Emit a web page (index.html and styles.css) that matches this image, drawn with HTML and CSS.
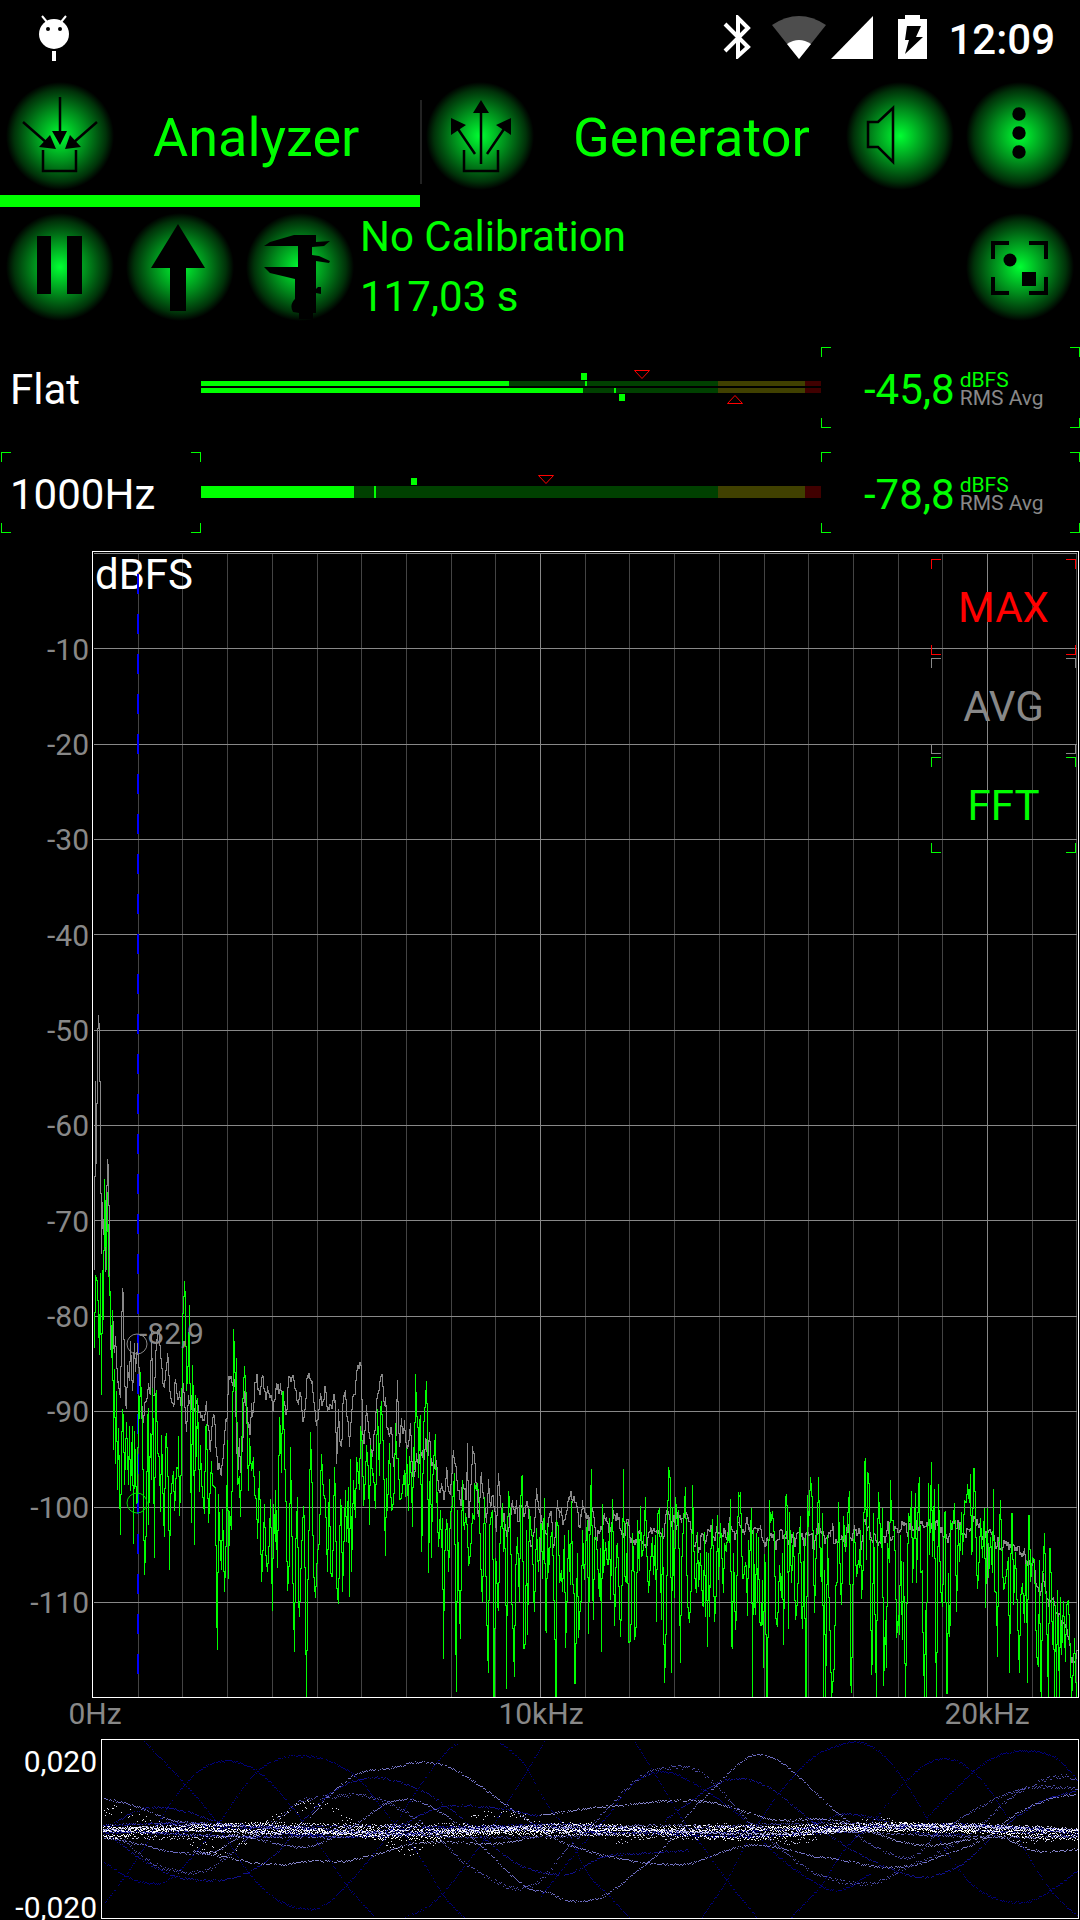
FILE: index.html
```html
<!DOCTYPE html>
<html lang="en">
<head>
<meta charset="utf-8">
<meta name="viewport" content="width=device-width, initial-scale=1">
<title>Audio Analyzer</title>
<link rel="stylesheet" href="styles.css">
</head>
<body>
<header class="status">
  <svg class="status-bug" width="32" height="48" viewBox="38 15 32 48" aria-hidden="true">
    <path d="M42 16l5 6M66 16l-5 6" stroke="#fff" stroke-width="2"/>
    <ellipse cx="54" cy="34" rx="15" ry="15" fill="#fff"/>
    <circle cx="48" cy="29" r="2" fill="#000"/><circle cx="60" cy="29" r="2" fill="#000"/>
    <path d="M52 51h4v10h-4z" fill="#fff"/>
  </svg>
  <div class="status-icons">
    <svg width="28" height="44" viewBox="0 0 28 44" aria-hidden="true"><path d="M2 9L25 32 15 41V3L25 13 2 36" fill="none" stroke="#fff" stroke-width="4"/></svg>
    <svg class="wifi" width="54" height="44" viewBox="0 0 54 44" aria-hidden="true"><path d="M27 44L0 10Q27-8 54 10z" fill="#4d4d4d"/><path d="M27 44L15 29Q27 21 39 29z" fill="#fff"/></svg>
    <svg class="signal" width="42" height="44" viewBox="0 0 42 44" aria-hidden="true"><path d="M42 1V44H0z" fill="#fff"/></svg>
    <svg class="battery" width="30" height="44" viewBox="0 0 30 44" aria-hidden="true"><path d="M7 0h15v4h7v40H0V4h7z" fill="#fff"/><path d="M9 11h14l-5 11h7L7 39l4-14H7z" fill="#000"/></svg>
    <span class="clock">12:09</span>
  </div>
</header>

<nav class="tabs">
  <button class="tab tab-active" type="button">
    <svg class="orb" viewBox="0 0 120 120" aria-hidden="true">
      <path d="M60 21V58M23 46L47 67M97 46L73 67M43 74V95H76V74" class="thin"/>
      <path d="M52 55h15l-7 14zM50 59l6 14-17-2zM70 59l-5 14 16-2z"/>
    </svg>
    <span>Analyzer</span>
  </button>
  <button class="tab" type="button">
    <svg class="orb" viewBox="0 0 120 120" aria-hidden="true">
      <path d="M61 30V88M38 53L55 78M84 53L67 78M44 74V95H78V74" class="thin"/>
      <path d="M61 24l8 13H53zM31 42l15 7-15 10zM91 42l-15 7 15 10z"/>
    </svg>
    <span>Generator</span>
  </button>
  <button class="orb-button" type="button" aria-label="Sound">
    <svg class="orb" viewBox="0 0 120 120" aria-hidden="true"><path d="M28 46H38L53 32V86L38 71H28z" class="thin"/></svg>
  </button>
  <button class="orb-button" type="button" aria-label="Menu">
    <svg class="orb" viewBox="0 0 120 120" aria-hidden="true"><circle cx="59" cy="38" r="6.7"/><circle cx="59" cy="57" r="6.7"/><circle cx="59" cy="76" r="6.7"/></svg>
  </button>
</nav>

<section class="toolbar">
  <button class="orb-button" type="button" aria-label="Pause">
    <svg class="orb" viewBox="0 0 120 120" aria-hidden="true"><path d="M37 29h14v58H37zM67 29h15v58H67z"/></svg>
  </button>
  <button class="orb-button" type="button" aria-label="Peak">
    <svg class="orb" viewBox="0 0 120 120" aria-hidden="true"><path d="M58 17L85 61H66V104H50V61H31z"/></svg>
  </button>
  <button class="orb-button" type="button" aria-label="Calibration">
    <svg class="orb" viewBox="0 0 120 120" aria-hidden="true"><path d="M24 39L30 35 54 28H76V35L90 34 84 39 72 40V48L79 49 90 54 89 56 76 54V82L78 80H81V87L76 86V106H73V112H59V106L53 105Q49 98 55 92V72L30 66 24 60H58V39z"/></svg>
  </button>
  <div class="calibration"><span>No Calibration</span><span>117,03 s</span></div>
  <button class="orb-button" type="button" aria-label="Snapshot">
    <svg class="orb" viewBox="0 0 120 120" aria-hidden="true">
      <path d="M33 52V36H49M69 36H86V52M33 70V86H49M69 86H86V70" class="thick"/>
      <circle cx="50" cy="53" r="6.5"/><path d="M62 65h14v14H62z"/>
    </svg>
  </button>
</section>

<section class="meters">
  <div class="meter-row">
    <span class="meter-name">Flat</span>
    <svg class="meter" viewBox="0 0 620 81" preserveAspectRatio="none" role="img" aria-label="Flat level">
      <path d="M0 34h517v5H0zM0 41h517v5H0z" fill="#004000"/>
      <path d="M517 34h87v5h-87zM517 41h87v5h-87z" fill="#404000"/>
      <path d="M604 34h16v5h-16zM604 41h16v5h-16z" fill="#400000"/>
      <path d="M0 34h308v5H0zM0 41h382v5H0zM384 34h2v5h-2zM413 41h2v5h-2zM380 26h6v7h-6zM418 47h6v7h-6z" fill="#0f0"/>
      <path d="M433.500 23.500h15l-7.500 8zM526.500 56.500h15l-7.500-8z" fill="none" stroke="#f00"/>
    </svg>
    <button class="readout frame" type="button"><span class="value">-45,8</span><span class="units"><span>dBFS</span><span class="dim">RMS Avg</span></span></button>
  </div>
  <div class="meter-row">
    <button class="meter-name frame" type="button"><span>1000Hz</span></button>
    <svg class="meter" viewBox="0 0 620 81" preserveAspectRatio="none" role="img" aria-label="1000Hz level">
      <path d="M0 34h517v12H0z" fill="#004000"/>
      <path d="M517 34h87v12h-87z" fill="#404000"/>
      <path d="M604 34h16v12h-16z" fill="#400000"/>
      <path d="M0 34h153v12H0zM173 34h2v12h-2zM210 26h6v7h-6z" fill="#0f0"/>
      <path d="M337.500 23.500h15l-7.500 8z" fill="none" stroke="#f00"/>
    </svg>
    <button class="readout frame" type="button"><span class="value">-78,8</span><span class="units"><span>dBFS</span><span class="dim">RMS Avg</span></span></button>
  </div>
</section>

<section class="spectrum">
  <svg class="plot" viewBox="0 540 1080 1190" role="img" aria-label="Frequency spectrum">
    <g id="grid" class="crisp"></g>
    <text x="95" y="589" class="title">dBFS</text>
    <g class="axis axis-y">
      <text x="89" y="660">-10</text><text x="89" y="755">-20</text><text x="89" y="850">-30</text>
      <text x="89" y="946">-40</text><text x="89" y="1041">-50</text><text x="89" y="1136">-60</text>
      <text x="89" y="1232">-70</text><text x="89" y="1327">-80</text><text x="89" y="1422">-90</text>
      <text x="89" y="1518">-100</text><text x="89" y="1613">-110</text>
    </g>
    <g class="axis axis-x">
      <text x="95" y="1724">0Hz</text><text x="541" y="1724">10kHz</text><text x="987" y="1724">20kHz</text>
    </g>
    <path d="M138 574V1675" class="cursor"/>
    <path id="average" class="trace average"/>
    <path id="live" class="trace live"/>
    <circle cx="137" cy="1344" r="10" class="marker"/>
    <circle cx="137" cy="1503" r="10" class="marker marker-live"/>
    <text x="139" y="1344" class="marker-value">-82,9</text>
    <path d="M92.500 551.500H1078.500V1697.500H92.500z" class="border"/>
  </svg>
  <div class="legend">
    <button class="frame max" type="button">MAX</button>
    <button class="frame avg" type="button">AVG</button>
    <button class="frame fft" type="button">FFT</button>
  </div>
</section>

<section class="scope">
  <svg class="plot" viewBox="0 1730 1080 190" role="img" aria-label="Waveform">
    <g id="waves" class="crisp"></g>
    <path d="M101.500 1739.500H1078.500V1918.500H101.500z" class="border"/>
    <text x="97" y="1772" class="scope-label">0,020</text>
    <text x="97" y="1918" class="scope-label">-0,020</text>
  </svg>
</section>
<script src="script.js"></script>
</body>
</html>
```

FILE: styles.css
```css
* { box-sizing: border-box; }

body {
  margin: 0;
  background: #000;
  color: #fff;
  font-family: Roboto, "Noto Sans", sans-serif;
  font-size: 42px;
  line-height: 60px;
}

button {
  margin: 0;
  padding: 0;
  border: 0;
  background: none;
  color: inherit;
  font: inherit;
  cursor: pointer;
}

svg { display: block; flex: none; }

/* status bar */
.status {
  display: flex;
  justify-content: space-between;
  align-items: flex-start;
  height: 76px;
  padding: 15px 25px 0 38px;
}
.status-icons { display: flex; align-items: center; height: 44px; }
.wifi { margin-left: 21px; }
.signal { margin-left: 5px; }
.battery { margin-left: 25px; }
.clock { margin-left: 20px; padding-top: 6px; font-weight: 500; }

/* tabs and round buttons */
.tabs { display: flex; height: 131px; color: #0f0; }
.tab {
  display: flex;
  flex: 1;
  gap: 33px;
  align-items: center;
  height: 131px;
  border-bottom: 12px solid transparent;
  font-size: 54px;
  text-align: left;
}
.tab span { padding-top: 4px; }
.tab-active { border-bottom-color: #0f0; }
.tab + .tab {
  background: linear-gradient(#222, #222) left top 24px / 2px 84px no-repeat;
}
.orb-button { flex: none; width: 120px; height: 120px; }
.orb {
  width: 120px;
  height: 120px;
  background: radial-gradient(circle, #00ff32 0, #008e1c 26px, #003209 46px, transparent 54px);
}
.thin { fill: none; stroke: #000; stroke-width: 2.5; }
.thick { fill: none; stroke: #000; stroke-width: 4; }

.toolbar { display: flex; height: 120px; color: #0f0; }
.calibration { display: flex; flex: 1; flex-direction: column; }

/* corner brackets */
.frame {
  --h: linear-gradient(currentColor, currentColor);
  background:
    var(--h) left top / 10px 1px, var(--h) left top / 1px 10px,
    var(--h) right top / 10px 1px, var(--h) right top / 1px 10px,
    var(--h) left bottom / 10px 1px, var(--h) left bottom / 1px 10px,
    var(--h) right bottom / 10px 1px, var(--h) right bottom / 1px 10px;
  background-repeat: no-repeat;
}

/* level meters */
.meters { display: flex; flex-direction: column; gap: 24px; padding-top: 20px; }
.meter-row { display: flex; align-items: center; height: 81px; }
.meter { flex: 1; width: 0; height: 81px; }
.meter-name {
  width: 200px;
  height: 81px;
  margin-left: 1px;
  padding: 13px 0 8px 9px;
  text-align: left;
}
.meter-name.frame { color: #0f0; }
.meter-name.frame span { color: #fff; }
.readout {
  display: flex;
  align-items: center;
  gap: 5px;
  width: 259px;
  height: 81px;
  padding: 5px 0 0 43px;
  color: #0f0;
  text-align: left;
}
.units { display: flex; flex-direction: column; padding-bottom: 3px; font-size: 21px; line-height: 18px; }
.dim { color: #888; }

/* spectrum */
.spectrum { position: relative; margin-top: 7px; }
.plot { width: 100%; height: auto; }
.plot text { font-size: 30px; }
.plot .title { font-size: 42px; fill: #fff; }
.axis { fill: #888; }
.axis-y { text-anchor: end; }
.axis-x { text-anchor: middle; }
.crisp, .trace, .cursor, .border { shape-rendering: crispEdges; }
.minor { stroke: #444; }
.major { stroke: #888; }
.trace { fill: none; stroke-width: 1; }
.average { stroke: #888; }
.live { stroke: #0f0; }
.cursor { fill: none; stroke: #00f; stroke-width: 2; stroke-dasharray: 20 20; }
.marker { fill: none; stroke: #888; }
.marker-live { stroke: #0d0; }
.marker-value { fill: #888; }
.border { fill: none; stroke: #fff; }
.legend {
  position: absolute;
  top: 19px;
  right: 4px;
  display: grid;
  gap: 3px;
  width: 145px;
}
.legend .frame { height: 96px; padding-top: 2px; }
.max { color: #f00; }
.avg { color: #888; }
.fft { color: #0f0; }

.scope-label { fill: #fff; text-anchor: end; }
```

FILE: script.js
```js
const NS = 'http://www.w3.org/2000/svg';

function addPath(parent, d, attrs) {
  const p = document.createElementNS(NS, 'path');
  p.setAttribute('d', d);
  for (const k in attrs) p.setAttribute(k, attrs[k]);
  parent.appendChild(p);
}

// Grid: 1 kHz columns, 10 dB rows
const grid = document.getElementById('grid');
let minor = '', major = '';
for (let k = 1; k <= 22; k++) {
  const line = `M${Math.floor(93.5 + k * 44.7) + 0.5} 553V1697`;
  if (k % 10) minor += line; else major += line;
}
for (let k = 0; k < 12; k++) major += `M94 ${Math.floor(553.5 + k * 95.35) + 0.5}H1077`;
addPath(grid, minor, { class: 'minor' });
addPath(grid, major, { class: 'major' });

const bands = [[80, 980, 3, 2.119], [360, 1300, 3, 3], [720, 1380, 3, 3]];

const live = [
`43,780 46,625 52,640 58,795 61,620 65,880 67,615 70,720 73,422 76,510 79,615 82,450 86,585 89,670 92,660 95,800 98,700 100,995 103,825 106,1025 110,870 113,1080 116,950 121,1177 124,1000 127,908 131,930 134,1070 139,937 146,1070 149,945 152,1083 157,945 160,1195 164,955 168,1110 172,1100 175,880 178,930 181,830 187,960 194,1260 199,1150 201,930 205,907 206,1155 212,960 214,1060 217,865 220,990 223,1224 226,880 229,868 233,1000 238,1010 241,1128 244,965 249,1128 253,1180 256,970 260,960 264,1080 268,1250 271,1100 275,1075 280,1040 284,1125 290,1032 295,1035 296,967 299,1135 304,1020 307,710 310,700 313,638 316,680 320,870 324,800 327,688 331,1020 334,1150 337,815 340,900 343,1197 347,880 350,1010 353,885 358,1085 361,985 365,1060 373,1132 376,950 379,940 385,1150 390,1065 395,1020 398,1070 406,1075 409,1320 412,1420 415,1090 418,1165 424,1250 427,1120 433,1297 439,1165 443,975 446,1270 449,1125 455,1165 458,1000 461,740 464,790 467,870 470,800 473,1070 479,1050 482,1138 488,910 493,818 499,890 505,1083 509,970 514,1040 520,1010 523,1090 530,1100 532,1185 539,1040 545,1275 549,1185 554,1110 557,1205 563,1255 569,1180 572,1100 577,1337 580,1110 585,1190 587,1080 593,1245 597,925 600,960 603,1045 606,873 610,870 613,1030 617,1040 622,1295 628,1225 632,990 635,1130 643,1425 646,1210 652,1095 655,1305 659,1350 664,1210 669,1115 674,1150 679,1520 683,1320 688,1115 692,957 697,1100 700,1250 706,1310 712,1210 718,1190 721,1070 725,1005 730,1090 736,1100 743,1255 748,1058 751,1255 757,1265 763,1032 766,1100 770,1278 776,1323 780,1100 784,1125 788,1297 796,1080 800,1190 805,1075 809,1307 812,1015 815,1255 820,1060 826,1140 830,1010 836,1050 839,1080 842,945 848,985 851,1115 856,1050 860,985 864,1040 868,1155 872,985 876,1050 880,1045 887,1120 892,908 897,1050`,
`61,330 64,303 67,380 70,460 76,768 79,535 82,632 87,430 91,550 95,632 100,605 104,550 107,370 110,475 114,475 119,598 125,595 132,510 137,590 140,445 145,632 149,468 153,530 157,680 160,440 163,510 166,222 170,330 174,400 176,535 178,365 181,345 185,755 188,655 190,380 194,345 199,243 202,375 206,818 211,450 214,773 218,550 222,435 226,403 228,610 230,500 233,650 236,740 240,630 244,745 248,655 251,1076 254,780 258,658 262,680 266,815 272,640 278,610 283,520 286,945 289,1175 293,630 296,820 301,1018 304,720 306,540 310,660 313,690 317,640 322,680 326,797 332,760 337,640 342,660 344,548 350,570 352,548 357,625 362,775 368,905 374,592 378,905 381,1042 385,1120 389,680 393,640 398,630 399,920 401,1190 403,1190 405,775 409,790 412,905 415,932 419,755 424,650 427,610 431,755 434,660 438,1000 440,1168 443,720 446,573 450,635 455,885 458,935 463,1132 467,820 472,712 478,905 482,640 485,527 488,525 490,1040 493,1045 497,1020 499,690 502,1006 505,820 509,628 513,705 517,705 521,875 524,935 529,683 535,815 540,675 544,670 548,838 553,595 557,980 560,998 562,670 566,820 570,715 576,690 580,840 585,1075 586,1190 589,1190 590,660 594,680 598,850 604,810 607,875 613,705 616,1045 621,855 626,690 630,855 635,603 638,840 642,890 644,1150 647,1150 649,905 653,760 656,1015 660,905 664,900 668,690 672,840 677,740 681,660 685,1003 690,600 694,508 697,840 700,960 704,710 708,712 713,780 718,892 722,745 725,1057 727,612 730,820 735,725 741,795 746,790 748,655 752,900 758,598 763,977 768,740 773,730 777,900 782,1010 786,800 790,507 794,820 799,848 802,665 806,1030 810,1020 813,920 817,698 822,850 824,1020 828,970 832,660 838,812 841,618 845,770 851,740 856,592 860,730 866,880 872,785 876,710 880,825 886,705 890,965 893,645 898,625 904,960 908,685 912,1148 918,950 922,700 926,500 930,540 934,1118 938,620 943,893 947,590 952,675 956,630 960,1090 964,800 970,665 976,562 980,745 983,905 989,970 994,840 998,555 1003,820 1008,880 1012,695 1016,860 1022,760 1027,905 1031,920 1034,695 1037,950 1040,755 1043,1040 1046,760 1049,950 1052,770 1058,657 1063,965 1068,860 1073,645 1076,840`,
`0,430 4,485 7,580 10,640 14,490 19,515 22,455 27,490 31,358 34,785 38,808 41,518 46,750 49,690 52,480 55,335 59,350 62,335 67,590 71,595 76,545 80,560 83,708 86,480 89,565 92,455 95,383 97,950 100,450 104,655 107,706 109,460 113,670 116,470 119,720 124,738 127,600 129,865 132,522 136,570 140,950 142,950 144,590 149,360 152,430 158,393 162,470 166,705 173,740 178,555 184,655 187,520 190,795 195,350 199,343 202,405 205,748 208,395 213,610 219,455 223,600 227,720 232,660 236,555 241,408 245,680 248,748 253,475 257,950 260,950 262,345 266,440 271,290 276,365 282,698 288,480 292,440 296,290 301,570 305,605 308,400 311,950 314,570 317,950 320,760 322,465 326,600 332,800 335,950 338,920 343,850 347,620 352,600 356,367 360,610 365,675 371,408 376,515 380,480 384,370 388,333 392,890 395,940 400,500 404,450 409,590 414,540 418,565 421,450 425,658 430,540 434,250 436,234 439,540 442,275 446,280 449,340 454,885 457,820 461,400 466,800 469,950 472,490 476,335 480,460 484,505 487,385 491,917 495,720 499,865 502,490 507,550 512,300 515,420 519,420 525,540 530,775 534,705 538,765 542,465 547,780 551,545 556,950 560,760 566,400 570,430 574,333 578,610 582,430 586,340 590,610 594,325 598,292 602,580 606,570 608,690 612,950 615,690 618,950 620,770 623,560 626,310 629,525 634,246 638,530 643,328 646,740 650,950 653,680 656,313 661,620 667,680 672,400 676,392 680,938 683,935 685,580 688,772 691,700 692,420 698,450 702,368 706,470 710,697 714,430 718,545 724,395 727,525 733,360 738,370 743,312 747,370 751,283 754,525 758,500 761,265 764,265 768,540 773,628 778,520 782,415 788,535 793,385 797,683 801,385 806,593 811,470 816,580 820,328 824,630 828,640 832,830 836,525 840,360 845,470 849,630 856,600 864,530 869,878 873,400 876,400 880,675 887,515 892,705 897,880 902,650 908,610 913,728 916,560 920,540 923,910 926,405 929,405 932,605 937,530 943,540 949,820 954,860 958,540 962,915 965,950 968,610 974,460 979,700 984,950 987,505 991,505 996,795 1000,660 1004,950 1007,675 1010,950 1013,630 1017,950 1021,650 1025,825 1031,663 1036,845 1040,675 1045,660 1050,830 1055,950 1060,860 1063,775 1066,860 1070,950`];

const average = [
`43,615 46,215 49,390 52,130 55,75 58,105 61,320 64,580 67,470 70,540 73,480 77,618 80,490 82,380 85,400 88,550 92,785 95,770 98,715 102,790 106,755 112,855 116,850 121,885 124,750 127,652 130,670 133,850 138,910 142,815 147,850 151,765 157,870 163,770 167,830 173,770 178,850 183,870 188,935 193,910 200,885 205,855 210,880 214,730 218,870 222,870 228,760 234,740 240,790 246,840 252,865 257,830 262,790 268,860 274,895 280,905 287,845 293,890 299,870 303,920 309,855 314,890 319,958 325,880 331,910 336,870 342,915 349,890 355,900 361,920 366,930 373,935 379,893 385,950 392,1000 397,930 401,920 407,960 412,1035 418,1030 424,1050 430,990 437,930 441,915 445,840 450,845 456,860 461,845 467,880 473,1050 478,970 482,1045 488,990 494,870 500,900 505,950 510,955 514,897 518,925 523,870 530,835 535,865 541,875 548,838 555,890 561,860 567,880 572,885 580,910 586,875 590,855 595,870 600,855 606,870 613,900 619,920 626,845 633,842 641,840 648,880 655,900 659,875 664,890 670,935 676,890 683,838 691,845 697,850 704,910 709,945 716,920 722,875 728,900 736,865 743,915 748,900 754,910 760,885 765,890 770,1025 774,910 778,960 784,990 790,880 796,868 802,930 809,990 815,930 820,880 827,865 833,825 840,813 845,815 848,960 854,975 860,900 866,950 875,1010 884,960 890,900 897,860`,
`66,222 70,290 75,320 77,290 82,390 88,410 94,390 100,500 106,460 110,350 113,240 118,440 124,355 128,400 134,360 139,440 145,440 150,370 156,520 162,525 168,460 174,480 180,460 186,450 192,480 197,415 202,470 208,395 213,480 220,500 228,490 233,510 238,580 245,550 252,595 259,502 266,570 272,585 279,450 286,490 292,550 300,615 306,560 312,570 318,600 321,430 326,650 332,600 337,437 343,480 349,560 356,650 363,515 368,580 374,590 379,670 386,538 391,620 397,590 403,625 409,695 415,520 420,600 427,650 433,655 439,705 446,680 452,640 458,600 464,640 470,600 475,665 482,610 489,640 495,620 500,610 506,640 512,730 518,720 524,700 529,565 534,630 540,640 547,690 554,680 560,705 568,640 573,635 580,745 586,680 592,600 598,655 603,620 607,670 615,655 622,620 628,600 631,575 637,610 643,595 650,625 657,675 663,650 667,600 673,640 680,640 687,680 692,620 698,620 704,680 710,720 716,690 722,680 728,690 734,640 740,650 747,690 753,665 760,630 767,660 772,640 779,670 785,690 790,705 796,690 803,658 810,720 817,705 824,720 830,730 837,690 843,720 850,735 857,740 864,710 872,680 880,690 888,690 896,700 904,710 911,710 916,650 922,630 928,660 935,680 942,655 949,690 956,635 963,670 970,660 977,630 984,650 991,670 998,700 1004,740 1010,705 1016,755 1023,710 1030,705 1037,720 1044,690 1050,680 1057,700 1064,710 1071,690 1078,700`,
`0,455 8,465 15,450 22,470 28,410 35,440 42,470 50,450 58,412 65,450 72,465 80,420 88,440 96,460 104,445 112,460 120,435 127,480 135,485 142,470 150,460 158,470 166,500 174,480 182,450 190,470 198,465 206,480 214,470 222,490 230,470 238,440 246,480 252,495 258,465 266,455 273,460 280,500 288,450 293,435 300,460 308,450 315,480 322,465 330,470 336,430 343,490 350,490 357,480 365,465 372,500 379,455 386,440 394,475 402,435 410,460 418,460 425,510 434,420 441,450 448,445 456,480 464,465 472,495 480,480 488,470 495,470 502,425 508,450 515,480 522,450 530,445 538,450 546,435 554,425 562,460 570,430 578,440 586,430 594,450 602,430 610,445 620,440 630,430 640,455 650,430 660,450 668,450 676,470 684,480 692,455 700,430 708,445 716,430 724,450 732,460 740,455 748,455 756,445 764,410 772,430 780,445 788,470 796,465 804,455 812,460 820,450 828,500 836,480 844,505 852,480 860,490 868,510 876,490 884,510 892,510 900,515 908,520 913,505 918,550 926,540 934,570 942,550 950,620 957,650 964,610 970,580 977,620 985,680 992,660 1000,650 1008,700 1016,710 1024,720 1032,750 1040,745 1048,780 1054,850 1060,830 1066,850 1072,810`];

let seed = 7;
function rnd() {
  seed = (seed * 16807) % 2147483647;
  return seed / 2147483647;
}

function pairs(text) {
  return text.trim().split(/\s+/).map(s => s.split(',').map(Number));
}

// Steps pixel by pixel between samples; ripple is the bin-to-bin noise in pixels
function tracePath(data, ripple) {
  const pts = [];
  data.forEach((text, i) => {
    const [ox, oy, sx, sy] = bands[i];
    pairs(text).forEach(([x, y]) => pts.push([Math.floor(ox + x / sx) + 0.5, Math.round(oy + y / sy)]));
  });
  let d = `M${pts[0][0]} ${pts[0][1]}`;
  for (let i = 1; i < pts.length; i++) {
    const [px, py] = pts[i - 1], [x, y] = pts[i];
    const n = Math.max(x - px, 1);
    let at = py;
    for (let s = 1; s <= n; s++) {
      const goal = py + (y - py) * (s - 0.5) / n + (n > 1 ? (rnd() - 0.5) * ripple : 0);
      at = Math.round(goal);
      d += `V${at}H${px + (x - px) * s / n}`;
    }
    d += `V${y}`;
  }
  return d;
}
document.getElementById('average').setAttribute('d', tracePath(average, 10));
document.getElementById('live').setAttribute('d', tracePath(live, 0));

// Waveform history, oldest sweeps darkest
const waves = document.getElementById('waves');
const sweeps = [
  ['#00007c', 1, '415,150 535,280 620,385 720,545 800,625 880,655 940,645 1010,580 1110,455 1210,300 1290,190 1340,150'],
  ['#00007c', 1, '300,645 400,500 500,330 580,240 660,212 750,245 850,355 930,470 1010,590 1090,685'],
  ['#00007c', 1, '300,515 370,560 440,580 500,560 580,470 640,390 700,300 750,240 810,205 880,197 950,210 1040,265 1120,370 1200,470 1290,620 1350,685'],
  ['#00007c', 1, '1170,685 1240,650 1300,590 1390,470 1470,340 1530,240 1580,155'],
  ['#00007c', 1, '1450,155 1520,220 1580,330 1650,430 1700,540 1770,620 1830,685'],
  ['#00007c', 1, '1568,620 1660,500 1760,380 1850,270 1940,245 2030,290 2140,370 2240,480 2340,560 2430,600 2530,550'],
  ['#00007c', 1, '2293,685 2380,590 2450,480 2545,380 2630,270 2730,205 2820,240 2900,340 2970,470 3050,600 3130,680'],
  ['#00007c', 1, '1843,155 1900,250 1970,370 2040,470 2110,570 2200,685'],
  ['#00007c', 1, '2035,685 2110,570 2170,450 2260,310 2360,200 2420,170 2490,155 2560,190 2630,280 2700,400 2770,520 2850,605 2970,637 3050,600 3130,540'],
  ['#00007c', 1, '2690,380 2760,310 2830,240 2900,195 2980,182 3060,200 3130,270'],
  ['#10108c', 1, '300,420 400,500 500,555 600,570 700,555 800,490 880,390 970,300 1080,262 1200,290 1300,350 1400,440 1500,520 1568,545 1650,550 1750,500 1850,490 2000,480'],
  ['#10108c', 1, '300,420 400,360 480,352 560,370 650,400 760,410 1000,440 1150,410 1250,360 1330,345 1450,355 1568,378'],
  ['#10108c', 1, '1930,390 2010,330 2080,280 2150,265 2230,290 2330,370 2430,450 2550,520 2670,560 2780,530 2860,460 2950,380 3030,330 3130,300'],
  ['#10108c', 1, '2300,430 2400,385 2460,370 2560,390 2680,430 2800,430'],
  ['#6a6abf', 1, '300,323 400,350 500,390 600,400'],
  ['#6a6abf', 1, '300,440 420,465 500,485 620,485 700,440 800,460 880,470 950,450 1050,390 1120,340 1200,330 1300,380 1400,470 1520,585 1600,610 1650,632 1750,618 1850,540 1920,480 2000,370 2080,285 2150,215 2200,193 2260,212 2330,270 2400,340 2470,400'],
  ['#8585cc', 1, '560,480 650,500 740,517 820,523 900,512 1000,512 1100,490 1200,460 1300,455 1440,460 1560,440'],
  ['#7575c8', 1, '900,380 960,310 1040,250 1150,230 1200,217 1290,225 1370,270 1450,330 1520,380 1600,440 1700,480 1800,505 1900,520 2000,520 2080,490 2170,465 2250,470 2350,495 2450,510 2550,530 2650,525 2750,490 2850,450 2950,370 3050,325 3130,310'],
  ['#4c4ca8', 3, '350,440 430,510 500,540 600,540 700,460 800,390 880,330 960,320 1050,315 1150,350 1250,420 1350,520 1450,580 1500,595 1568,570 1650,470 1750,370 1840,275 1900,240 1960,230 2030,245 2100,310 2170,390 2260,470 2350,540 2450,575 2550,575 2620,535 2700,500 2800,440 2850,400 2950,310 3030,270 3090,258 3130,270'],
  ['#8585cc', 1, '1568,375 1700,355 1800,345 1930,332 2060,335 2170,365 2250,390 2370,385 2450,395 2600,450 2700,465 2800,450 2900,440 3000,480 3130,478'],
  ['#4c4ca8', 2, '2480,430 2560,480 2650,500 2720,430 2780,390 2900,320 3000,290 3130,295'],
  ['#e0e0f0', 9, '300,375 340,358 420,390 500,420 620,475 700,460 760,410 860,355 930,340 1000,380 1060,420 1130,460 1190,480 1260,450 1330,415 1400,375 1480,370 1568,400'],
  ['#c8c8e8', 6, '1568,440 1700,420 1800,450 1950,420 2150,410 2300,455 2450,410 2560,390 2650,410 2770,405 2900,430 3000,450 3130,430']
];

function dots(color, noise, at, from, to, gap) {
  let d = '';
  for (let x = from; x <= to; x++) {
    if (rnd() < gap) continue;
    const y = Math.round(at(x) + (rnd() - 0.5) * noise);
    if (y > 1740 && y < 1918) d += `M${x} ${y + 0.5}h1`;
  }
  addPath(waves, d, { stroke: color });
}

// Smooth curve through the stored points
function curve(text) {
  const p = pairs(text).map(([x, y]) => [x / 2.904, 1690 + y / 3]);
  const f = x => {
    let i = 0;
    while (i < p.length - 2 && x > p[i + 1][0]) i++;
    const a = p[Math.max(i - 1, 0)], b = p[i], c = p[i + 1], e = p[Math.min(i + 2, p.length - 1)];
    const w = c[0] - b[0], t = (x - b[0]) / w;
    const m0 = (c[1] - a[1]) / (c[0] - a[0]) * w, m1 = (e[1] - b[1]) / (e[0] - b[0]) * w;
    return (2 * t ** 3 - 3 * t * t + 1) * b[1] + (t ** 3 - 2 * t * t + t) * m0
      + (3 * t * t - 2 * t ** 3) * c[1] + (t ** 3 - t * t) * m1;
  };
  return [f, Math.ceil(p[0][0]), Math.min(Math.floor(p[p.length - 1][0]), 1077)];
}
for (const [color, noise, text] of sweeps) {
  const [f, from, to] = curve(text);
  dots(color, noise + 1, f, from, to, noise > 4 ? 0.5 : 0.15);
}

// Quiet sweeps that stay near the zero line
const quiet = ['#00006a', '#00007c', '#00007c', '#14148a', '#3c3ca0', '#6a6abf', '#8585cc', '#a8a8dc',
  '#c8c8e8', '#e0e0f0', '#fff', '#fff'];
quiet.forEach((color, i) => {
  const amp = 3 + (i * 5 % 7) * 0.7, len = 50 + i * 13 % 70, phase = i * 2.3;
  const mid = 1830 + (i % 3 - 1);
  dots(color, i > 7 ? 4 : 2, x => mid + amp * Math.sin(x / len + phase), 103, 1077, 0.25);
});
dots('#fff', 2, () => 1830, 103, 1077, 0.3);
```
